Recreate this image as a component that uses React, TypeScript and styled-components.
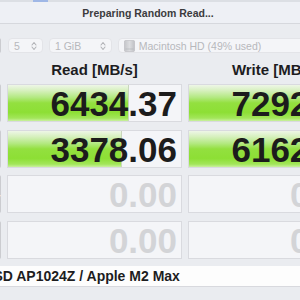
import React from "react";
import styled, { createGlobalStyle } from "styled-components";

const GlobalStyle = createGlobalStyle`
  html, body { margin: 0; padding: 0; }
  body {
    background: #eaecf0;
    overflow: hidden;
    font-family: "Liberation Sans", Arial, sans-serif;
  }
`;

const Page = styled.div`
  width: 300px;
  height: 300px;
  overflow: hidden;
  display: flex;
  flex-direction: column;
  background: #eaecf0;
`;

const TopEdge = styled.div`
  height: 2px;
  display: flex;
  background: #dcdfe4;
`;

const EdgeSpace = styled.div<{ $w: number }>`
  width: ${(p) => p.$w}px;
`;

const EdgeBlue = styled.div`
  width: 15px;
  background: #9fb7e6;
`;

const TitleBar = styled.div`
  height: 21px;
  display: flex;
  align-items: center;
  justify-content: center;
  padding-right: 4px;
  background: #eef0f5;
  border-bottom: 1px solid #d6d8dd;
  font-weight: 700;
  font-size: 10.5px;
  color: #3b3b3d;
`;

const Window = styled.div`
  margin-left: -70px;
  width: 440px;
  display: flex;
  flex-direction: column;
  padding-top: 14px;
`;

const Row = styled.div<{ $h: number; $mb?: number }>`
  display: grid;
  grid-template-columns: 71px 175px 175px;
  column-gap: 6px;
  height: ${(p) => p.$h}px;
  margin-bottom: ${(p) => p.$mb ?? 0}px;
`;

const SideButton = styled.div`
  background: #cbccd0;
  border-radius: 0 2px 2px 0;
  display: flex;
  align-items: center;
  justify-content: center;
  font-size: 11px;
  font-weight: 700;
  color: #ffffff;
`;

const Controls = styled.div`
  grid-column: 2 / 4;
  display: flex;
  gap: 6px;
  padding-left: 1px;
`;

const Select = styled.div<{ $w: number }>`
  width: ${(p) => p.$w}px;
  height: 15px;
  box-sizing: border-box;
  border: 1px solid #e3e4e8;
  border-radius: 4px;
  background: #f4f5f8;
  display: flex;
  align-items: center;
  padding: 0 5px 0 5px;
  gap: 4px;
  font-size: 10.5px;
  color: #b7b8bc;
`;

const SelectLabel = styled.span`
  flex: 1;
  white-space: nowrap;
`;

const Header = styled.div`
  display: flex;
  align-items: center;
  justify-content: center;
  padding-top: 2px;
  font-weight: 700;
  font-size: 15px;
  color: #1d1d1f;
`;

const Cell = styled.div`
  position: relative;
  box-sizing: border-box;
  border: 1px solid #d9dadf;
  background: #f4f5f8;
  display: flex;
  align-items: center;
  justify-content: flex-end;
  padding: 1px 4px 0 0;
  overflow: hidden;
`;

const Fill = styled.div`
  position: absolute;
  left: 0;
  top: 0;
  bottom: 0;
  border-right: 1px solid #c9d6bd;
  background: linear-gradient(
    180deg,
    #eef6e7 0%,
    #d6f0bd 16%,
    #b4e983 34%,
    #93e03f 50%,
    #8ddf35 76%,
    #a2e65a 92%,
    #c9f09f 100%
  );
`;

const Value = styled.span<{ $dim?: boolean }>`
  position: relative;
  font-weight: 700;
  font-size: 35px;
  line-height: 1;
  color: ${(p) => (p.$dim ? "#d3d4d7" : "#1c1c1c")};
`;

const Footer = styled.div`
  margin-top: 7px;
  margin-left: -70px;
  width: 440px;
  height: 21px;
  box-sizing: border-box;
  background: #fdfdfd;
  border-bottom: 1px solid #d8d9de;
  display: flex;
  align-items: center;
  padding-left: 3.5px;
  font-weight: 700;
  font-size: 14px;
  color: #1d1d1f;
  white-space: nowrap;
`;

const Chevrons = () => (
  <svg width="6" height="10" viewBox="0 0 6 10" fill="none">
    <polyline points="1,4 3,1.5 5,4" stroke="#b3b4b8" strokeWidth="1.1" strokeLinecap="round" strokeLinejoin="round" />
    <polyline points="1,6 3,8.5 5,6" stroke="#b3b4b8" strokeWidth="1.1" strokeLinecap="round" strokeLinejoin="round" />
  </svg>
);

const DriveIcon = () => (
  <svg width="11" height="12" viewBox="0 0 11 12">
    <defs>
      <linearGradient id="dg" x1="0" y1="0" x2="1" y2="0">
        <stop offset="0" stopColor="#c4c5c9" />
        <stop offset="0.5" stopColor="#dcdde0" />
        <stop offset="1" stopColor="#c0c1c5" />
      </linearGradient>
    </defs>
    <rect x="0.5" y="0.5" width="10" height="11" rx="1" fill="url(#dg)" stroke="#b8b9bd" strokeWidth="0.6" />
    <line x1="1.5" y1="9" x2="9.5" y2="9" stroke="#b0b1b5" strokeWidth="0.6" />
  </svg>
);

type RowData = { label: string; read: string; write: string; rf: number; wf: number; dim?: boolean };

const rows: RowData[] = [
  { label: "SEQ1M QD8", read: "6434.37", write: "7292.53", rf: 0.694, wf: 0.703 },
  { label: "SEQ1M QD1", read: "3378.06", write: "6162.71", rf: 0.651, wf: 0.691 },
  { label: "RND4K QD64", read: "0.00", write: "0.00", rf: 0, wf: 0, dim: true },
  { label: "RND4K QD1", read: "0.00", write: "0.00", rf: 0, wf: 0, dim: true },
];

export default function App() {
  return (
    <>
      <GlobalStyle />
      <Page>
        <TopEdge>
          <EdgeSpace $w={33} />
          <EdgeBlue />
        </TopEdge>
        <TitleBar>Preparing Random Read...</TitleBar>
        <Window>
          <Row $h={15}>
            <SideButton>All</SideButton>
            <Controls>
              <Select $w={35}>
                <SelectLabel>5</SelectLabel>
                <Chevrons />
              </Select>
              <Select $w={63}>
                <SelectLabel>1 GiB</SelectLabel>
                <Chevrons />
              </Select>
              <Select $w={246}>
                <DriveIcon />
                <SelectLabel>Macintosh HD (49% used)</SelectLabel>
                <Chevrons />
              </Select>
            </Controls>
          </Row>
          <Row $h={31}>
            <div />
            <Header>Read [MB/s]</Header>
            <Header>Write [MB/s]</Header>
          </Row>
          {rows.map((r, i) => (
            <Row key={r.label} $h={38} $mb={i < rows.length - 1 ? 7.6 : 0}>
              <SideButton>{r.label}</SideButton>
              <Cell>
                {r.rf > 0 && <Fill style={{ width: `${r.rf * 100}%` }} />}
                <Value $dim={r.dim}>{r.read}</Value>
              </Cell>
              <Cell>
                {r.wf > 0 && <Fill style={{ width: `${r.wf * 100}%` }} />}
                <Value $dim={r.dim}>{r.write}</Value>
              </Cell>
            </Row>
          ))}
        </Window>
        <Footer>APPLE SSD AP1024Z / Apple M2 Max</Footer>
      </Page>
    </>
  );
}
